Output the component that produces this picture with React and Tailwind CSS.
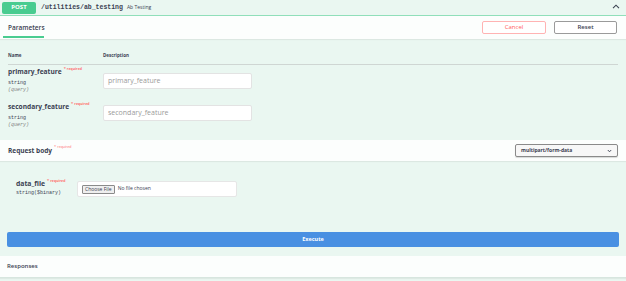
import React from 'react';

const sans = { fontFamily: '"Open Sans", "Liberation Sans", sans-serif' };

const Required = () => (
  <span className="relative -top-[4px] ml-[2px] text-[4px] text-[#ff6f6f]">* <span className="text-[3.5px]">required</span></span>
);

const ParamRow = ({ name, pad, inputTop }) => (
  <div className={`flex ${pad}`}>
    <div className="w-[95px]">
      <div className="text-[6.6px] leading-[10px] font-bold text-[#3b4151]">
        {name}
        <Required />
      </div>
      <div className="mt-[2px] font-['Liberation_Mono',monospace] text-[5px] leading-[7px] text-[#3b4151]">string</div>
      <div className="font-['Liberation_Mono',monospace] text-[5px] leading-[7px] italic text-[#808080]">(query)</div>
    </div>
    <div className={`${inputTop} h-[16px] w-[149px] rounded-[2px] border border-[#e3e3e3] bg-white px-[4px] text-[7px] leading-[14px] text-[#9a9a9a]`}>
      {name}
    </div>
  </div>
);

const App = () => {
  return (
    <div className="h-[281px] w-[626px] overflow-hidden bg-[#eaf7f1] text-[#3b4151]" style={sans}>
      {/* summary bar */}
      <div className="flex h-[16px] items-center border-b border-[#90dfba] pl-[2px] pr-[6px]">
        <div className="flex h-[12px] w-[34px] items-center justify-center rounded-[2px] bg-[#49cc90] text-[6px] font-bold text-white">POST</div>
        <span className="ml-[5px] font-['Liberation_Mono',monospace] text-[6.5px] font-bold">/utilities/ab_testing</span>
        <span className="ml-[4px] text-[5px]">Ab Testing</span>
        <svg className="ml-auto mt-[-2px]" width="8" height="5" viewBox="0 0 8 5" fill="none">
          <path d="M1 4.2 L4 1.2 L7 4.2" stroke="#3b4151" strokeWidth="1.1" />
        </svg>
      </div>

      {/* parameters header */}
      <div className="flex h-[23px] items-center bg-[#fcfefd] pl-[3px] pr-[9px] shadow-[0_1px_1px_rgba(0,0,0,0.06)]">
        <div className="flex h-full flex-col justify-end">
          <div className="px-[5px] pb-[4px] text-[6.5px] font-semibold leading-[8px]">Parameters</div>
          <div className="mb-[1px] h-[2px] w-[41px] bg-[#49cc90]" />
        </div>
        <div className="ml-auto flex gap-[8px]">
          <button className="h-[13px] w-[64px] rounded-[2px] border border-[#ffb3b3] bg-white text-[6px] text-[#ff6060]">Cancel</button>
          <button className="h-[13px] w-[63px] rounded-[2px] border border-[#9a9a9a] bg-white text-[6px] font-semibold">Reset</button>
        </div>
      </div>

      {/* parameters table */}
      <div className="px-[8px] pt-[13px]">
        <div className="flex border-b border-[#cfd6d3] pb-[6px] text-[4.5px] font-bold leading-[6px]">
          <div className="w-[95px]">Name</div>
          <div>Description</div>
        </div>
        <ParamRow name="primary_feature" pad="pt-[2px]" inputTop="mt-[6px]" />
        <ParamRow name="secondary_feature" pad="pt-[8px]" inputTop="mt-[3px]" />
      </div>

      {/* request body header */}
      <div className="mt-[11px] flex h-[21px] items-center bg-[#fcfefd] pl-[8px] pr-[8px] shadow-[0_1px_1px_rgba(0,0,0,0.06)]">
        <span className="text-[6.5px] font-bold">Request body</span>
        <Required />
        <div className="ml-auto flex h-[13px] w-[103px] items-center rounded-[2px] border border-[#8a8a8a] bg-[#f7f7f7] px-[5px] text-[5px] font-bold shadow-[0_1px_1px_rgba(0,0,0,0.15)]">
          multipart/form-data
          <svg className="ml-auto" width="5" height="4" viewBox="0 0 5 4" fill="none">
            <path d="M0.8 1 L2.5 2.8 L4.2 1" stroke="#3b4151" strokeWidth="0.9" />
          </svg>
        </div>
      </div>

      {/* body */}
      <div className="flex pl-[16px] pt-[18px]">
        <div className="w-[61px]">
          <div className="text-[6.8px] font-bold leading-[10px]">
            data_file
            <Required />
          </div>
          <div className="font-['Liberation_Mono',monospace] text-[5px] leading-[7px]">string($binary)</div>
        </div>
        <div className="mt-[2px] flex h-[16px] w-[160px] items-center rounded-[2px] border border-[#e6e6e6] bg-white pl-[4px] text-[5px]">
          <span className="rounded-[1px] border border-[#8a8a8a] bg-[#efefef] px-[2px] leading-[7px]">Choose File</span>
          <span className="ml-[3px]">No file chosen</span>
        </div>
      </div>

      {/* execute */}
      <div className="px-[7px] pt-[26px]">
        <button className="h-[15px] w-full rounded-[2px] bg-[#4990e2] text-[5.5px] font-bold text-white">Execute</button>
      </div>

      {/* responses */}
      <div className="mt-[9px] flex h-[22px] items-center border-b border-[#d7e6df] bg-[#fcfefd] pl-[7px] shadow-[0_1px_1px_rgba(0,0,0,0.05)]">
        <span className="text-[6px] font-semibold">Responses</span>
      </div>
    </div>
  );
};

export default App;
